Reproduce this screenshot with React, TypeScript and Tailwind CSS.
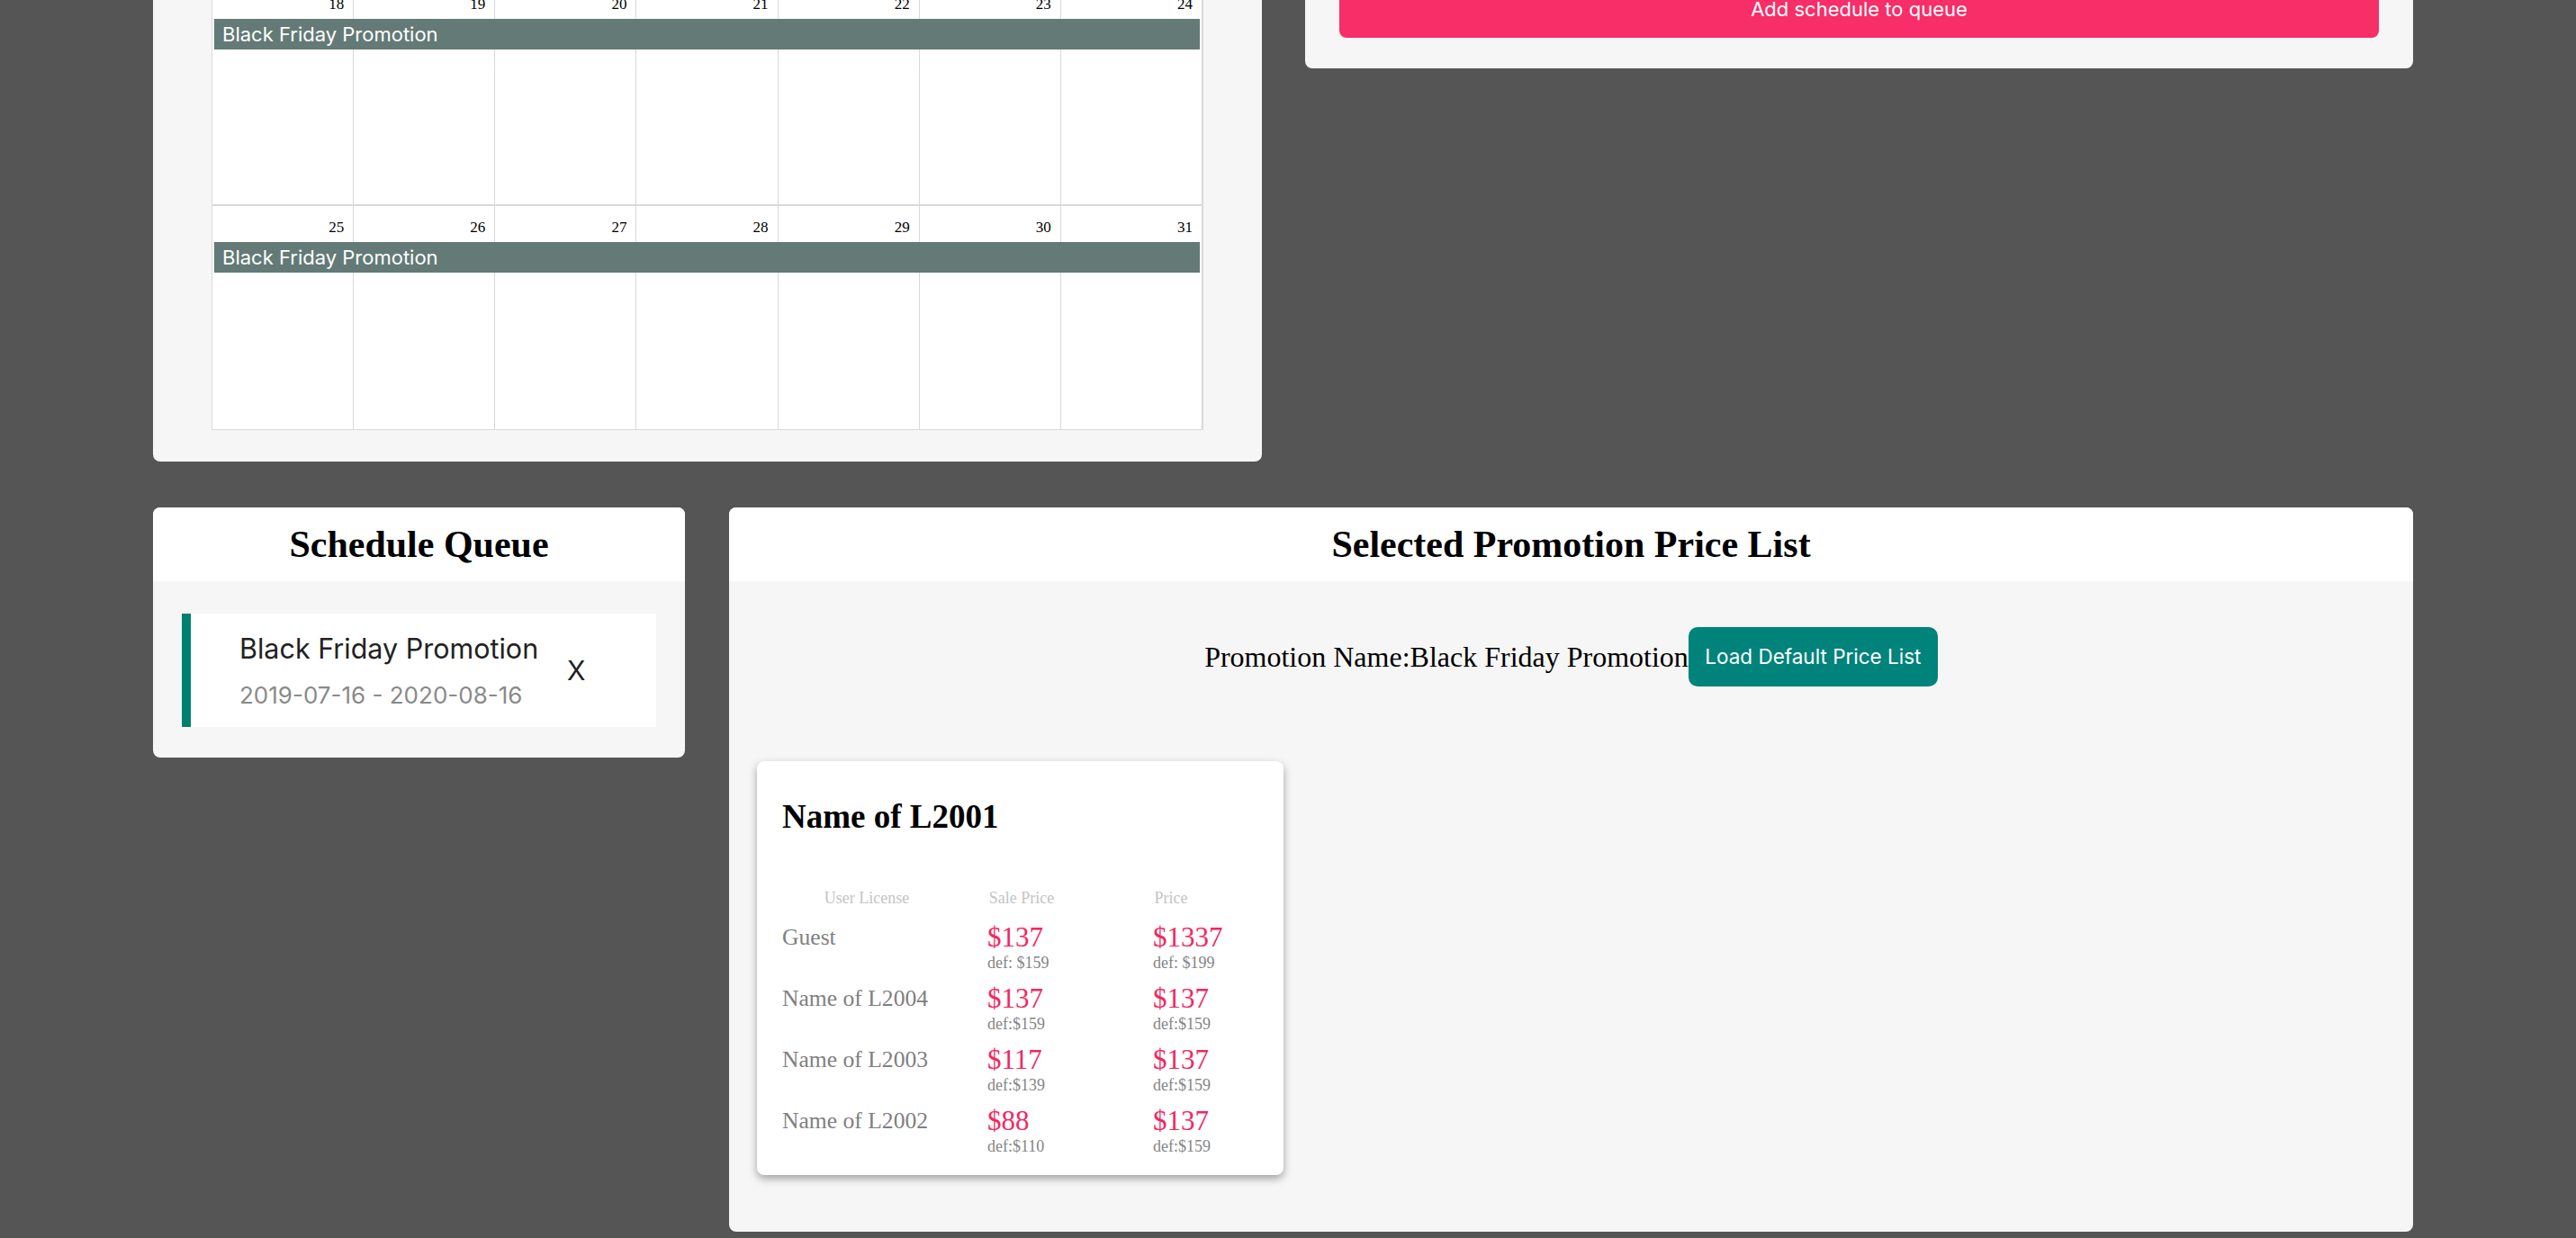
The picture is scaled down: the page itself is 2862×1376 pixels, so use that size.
import React from 'react'

const serif = "font-['Liberation_Serif','Times_New_Roman',serif]"
const sans = "font-['Inter','Roboto',sans-serif]"

const weeks = [
  [18, 19, 20, 21, 22, 23, 24],
  [25, 26, 27, 28, 29, 30, 31],
]

const prices = [
  { name: 'Guest', sale: '$137', saleDef: 'def: $159', price: '$1337', priceDef: 'def: $199' },
  { name: 'Name of L2004', sale: '$137', saleDef: 'def:$159', price: '$137', priceDef: 'def:$159' },
  { name: 'Name of L2003', sale: '$117', saleDef: 'def:$139', price: '$137', priceDef: 'def:$159' },
  { name: 'Name of L2002', sale: '$88', saleDef: 'def:$110', price: '$137', priceDef: 'def:$159' },
]

function CalendarCard() {
  return (
    <div className="w-[1232px] shrink-0 rounded-b-[8px] bg-[#f6f6f6] px-[65px] pt-[20px] pb-[35px]">
      <div className="border border-[#d9d9d9] bg-white">
        {weeks.map((week, i) => (
          <div
            key={i}
            className={`relative grid h-[248px] grid-cols-7 ${i === 0 ? 'border-b-2 border-[#d9d9d9]' : ''}`}
          >
            {week.map(d => (
              <div key={d} className="border-r border-[#d9d9d9] last:border-r-0">
                <div className={`${serif} pt-[14px] pr-[10px] text-right text-[17px] leading-[20px] text-black`}>{d}</div>
              </div>
            ))}
            {/* event bar spans the week */}
            <div className={`${sans} absolute left-[2px] right-[3px] top-[40px] flex h-[34px] items-center bg-[#637a76] pl-[9px] text-[22px] text-white`}>
              Black Friday Promotion
            </div>
          </div>
        ))}
      </div>
    </div>
  )
}

function ScheduleCard() {
  return (
    <div className="w-[1231px] shrink-0 rounded-b-[8px] bg-[#f6f6f6] px-[38px] pt-[18px] pb-[34px]">
      <button
        type="button"
        className={`${sans} flex h-[64px] w-full items-center justify-center rounded-[8px] bg-[#f72e68] text-[22px] text-white`}
      >
        Add schedule to queue
      </button>
    </div>
  )
}

function QueueCard() {
  return (
    <div className="w-[591px] shrink-0 overflow-hidden rounded-[8px] bg-[#f6f6f6]">
      <div className="flex h-[82px] items-center justify-center bg-white">
        <h2 className={`${serif} text-[42px] font-bold leading-[42px] text-black`}>Schedule Queue</h2>
      </div>
      <div className="px-[32px] pt-[36px] pb-[34px]">
        <div className="flex h-[126px] border-l-[10px] border-[#00806f] bg-white">
          <div className={`${sans} w-[418px] pl-[54px] pt-[21px]`}>
            <div className="text-[30.5px] leading-[36px] text-[#222222]">Black Friday Promotion</div>
            <div className="mt-[18px] text-[26px] leading-[32px] text-[#8a8a8a]">2019-07-16 - 2020-08-16</div>
          </div>
          <button type="button" className={`${sans} self-center text-[30px] leading-[36px] text-[#222222]`}>
            X
          </button>
        </div>
      </div>
    </div>
  )
}

function PriceCard() {
  return (
    <div className={`${serif} ml-[31px] w-[585px] rounded-[8px] bg-white pl-[28px] pt-[43px] pb-[8px] shadow-[0_4px_10px_rgba(0,0,0,0.35)]`}>
      <h3 className="text-[37px] font-bold leading-[37px] text-black">Name of L2001</h3>
      <div className="mt-[63px] grid grid-cols-[228px_184px_1fr] text-[18px] leading-[18px] text-[#c4c4c4]">
        <div className="w-[188px] text-center">User License</div>
        <div className="w-[76px] text-center whitespace-nowrap">Sale Price</div>
        <div className="w-[40px] text-center">Price</div>
      </div>
      <div className="mt-[19px]">
        {prices.map(p => (
          <div key={p.name} className="grid h-[68px] grid-cols-[228px_184px_1fr]">
            <div className="text-[25.6px] leading-[31px] text-[#808080]">{p.name}</div>
            <div>
              <div className="text-[31px] leading-[31px] text-[#f2285f]">{p.sale}</div>
              <div className="text-[18px] leading-[26px] text-[#858585]">{p.saleDef}</div>
            </div>
            <div>
              <div className="text-[31px] leading-[31px] text-[#f2285f]">{p.price}</div>
              <div className="text-[18px] leading-[26px] text-[#858585]">{p.priceDef}</div>
            </div>
          </div>
        ))}
      </div>
    </div>
  )
}

function PriceListCard() {
  return (
    <div className="w-[1871px] shrink-0 overflow-hidden rounded-[8px] bg-[#f6f6f6]">
      <div className="flex h-[82px] items-center justify-center bg-white">
        <h2 className={`${serif} text-[42px] font-bold leading-[42px] text-black`}>Selected Promotion Price List</h2>
      </div>
      <div className="pt-[51px] pb-[63px]">
        <div className="flex items-center justify-center">
          <span className={`${serif} text-[32px] leading-[32px] text-black`}>Promotion Name:Black Friday Promotion</span>
          <button
            type="button"
            className={`${sans} flex h-[66px] w-[277px] items-center justify-center rounded-[10px] bg-[#00837a] text-[22.5px] text-white`}
          >
            Load Default Price List
          </button>
        </div>
        <div className="mt-[83px]">
          <PriceCard />
        </div>
      </div>
    </div>
  )
}

export default function App() {
  return (
    <div className="h-[1376px] overflow-hidden bg-[#555555] pl-[170px]">
      <div className="-mt-[40px] flex items-start gap-[48px]">
        <CalendarCard />
        <ScheduleCard />
      </div>
      <div className="mt-[51px] flex items-start gap-[49px]">
        <QueueCard />
        <PriceListCard />
      </div>
    </div>
  )
}
